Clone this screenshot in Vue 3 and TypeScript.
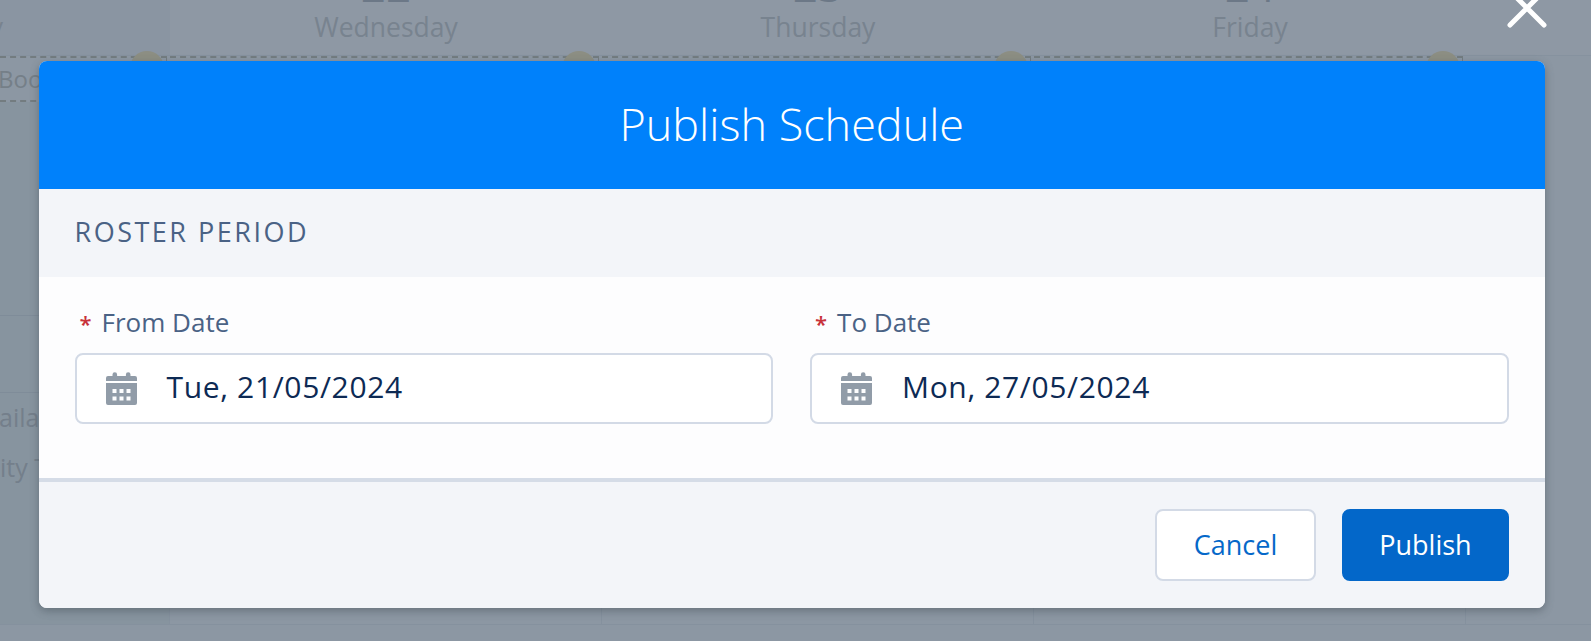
<script setup lang="ts">
interface DateField { label: string; value: string }
interface Day { num: string; name: string }
const days: Day[] = [
  { num: '22', name: 'Wednesday' },
  { num: '23', name: 'Thursday' },
  { num: '24', name: 'Friday' },
]
const fields: DateField[] = [
  { label: 'From Date', value: 'Tue, 21/05/2024' },
  { label: 'To Date', value: 'Mon, 27/05/2024' },
]
</script>

<template>
  <div class="page">
    <div class="calendar">
      <div class="head">
        <div class="head-cell first"><span class="day-cut">y</span></div>
        <div v-for="d in days" :key="d.name" class="head-cell">
          <span class="num">{{ d.num }}</span>
          <span class="day">{{ d.name }}</span>
        </div>
        <div class="head-cell last"></div>
      </div>
      <div class="band">
        <div class="band-cell first"><span class="boo">Boo</span><i class="dot"></i></div>
        <div v-for="d in days" :key="d.name" class="band-cell"><i class="dot"></i></div>
        <div class="band-cell last"></div>
      </div>
      <div class="rest">
        <div class="rest-cell first">
          <span class="side one">ailabl</span>
          <span class="side two">ity T</span>
        </div>
        <div v-for="d in days" :key="d.name" class="rest-cell"></div>
        <div class="rest-cell last"></div>
      </div>
    </div>

    <div class="overlay">
      <svg class="close" viewBox="0 0 40 40" width="40" height="40" aria-label="Close">
        <path d="M3 3 L37 37 M37 3 L3 37" stroke="#fff" stroke-width="5" stroke-linecap="round" fill="none" />
      </svg>
      <section class="modal">
        <header class="modal-head"><h1>Publish Schedule</h1></header>
        <div class="section-title">ROSTER PERIOD</div>
        <div class="modal-body">
          <div v-for="f in fields" :key="f.label" class="field">
            <label class="label"><abbr>*</abbr>{{ f.label }}</label>
            <div class="input">
              <svg class="cal-icon" viewBox="0 0 31 33" width="31" height="33">
                <path fill="#919ca8" d="M0 11h31v20a2 2 0 0 1-2 2H2a2 2 0 0 1-2-2z M2 4h4.500V2.500a2.300 2.300 0 0 1 4.600 0V4h8.800V2.500a2.300 2.300 0 0 1 4.600 0V4H29a2 2 0 0 1 2 2v3H0V6a2 2 0 0 1 2-2z"/>
                <g fill="#fdfdfe">
                  <rect x="6.500" y="17" width="4" height="4"/><rect x="13.500" y="17" width="4" height="4"/><rect x="20.500" y="17" width="4" height="4"/>
                  <rect x="6.500" y="24.500" width="4" height="4"/><rect x="13.500" y="24.500" width="4" height="4"/><rect x="20.500" y="24.500" width="4" height="4"/>
                </g>
              </svg>
              <span class="value">{{ f.value }}</span>
            </div>
          </div>
        </div>
        <footer class="modal-foot">
          <button class="btn neutral" type="button">Cancel</button>
          <button class="btn brand" type="button">Publish</button>
        </footer>
      </section>
    </div>
  </div>
</template>

<style>
html, body { margin: 0; padding: 0; background: #8b96a2; }
</style>

<style scoped>
.page {
  position: relative;
  width: 1591px;
  height: 641px;
  overflow: hidden;
  background: #8c97a3;
  font-family: "Open Sans", "Noto Sans", sans-serif;
}
.calendar { display: flex; flex-direction: column; height: 100%; }
.head, .band, .rest {
  display: grid;
  grid-template-columns: 170px 432px 432px 432px 1fr;
}
.head { height: 56px; box-sizing: border-box; border-bottom: 1px solid #86929f; background: #8e98a4; }
.head-cell {
  display: flex;
  flex-direction: column;
  align-items: center;
  box-sizing: border-box;
  overflow: hidden;
}
.head-cell.first { background: #8a95a2; align-items: flex-start; padding-top: 9px; }
.num {
  flex: none;
  margin-top: -33px;
  font-size: 44px;
  line-height: 36px;
  color: #6c7887;
}
.day { margin-top: 7px; font-size: 26.500px; line-height: 34px; color: #78838f; }
.day-cut { font-size: 26px; line-height: 34px; color: #78838f; margin-left: -10px; }
.band { height: 46px; }
.band-cell {
  position: relative;
  box-sizing: border-box;
  border-top: 2px dashed #737c80;
  border-bottom: 2px dashed #737c80;
  border-right: 1px solid #737c80;
  margin-right: 3px;
}
.band-cell.last { border: 0; margin: 0; }
.boo { display: block; margin-left: -2px; font-size: 24px; line-height: 42px; color: #757f88; }
.dot {
  position: absolute;
  right: 2px;
  top: -7px;
  width: 34px;
  height: 34px;
  border-radius: 50%;
  background: #8c8e83;
}
.rest { flex: 1; margin-bottom: 16px; border-bottom: 1px solid #85919e; }
.rest-cell { border-right: 1px solid #85919e; position: relative; overflow: hidden; }
.rest-cell.first {
  background:
    linear-gradient(#7f8c99, #7f8c99) 0 213px / 100% 1px no-repeat,
    linear-gradient(#7f8c99, #7f8c99) 0 290px / 100% 1px no-repeat,
    #87949f;
}
.rest-cell.last { border-right: 0; }
.side { position: absolute; font-size: 25px; color: #747f8b; line-height: 30px; }
.side.one { left: -1px; top: 300px; }
.side.two { left: 0; top: 350px; }

.overlay { position: absolute; inset: 0; }
.close { position: absolute; left: 1507px; top: -12px; }
.modal {
  position: absolute;
  left: 38.500px;
  top: 61px;
  width: 1506.500px;
  height: 547px;
  display: flex;
  flex-direction: column;
  border-radius: 8px;
  overflow: hidden;
  background: #f3f5f9;
  box-shadow: 0 3px 8px rgba(60, 70, 80, 0.45);
}
.modal-head {
  height: 128px;
  flex: none;
  display: flex;
  align-items: center;
  justify-content: center;
  box-sizing: border-box;
  padding-bottom: 4px;
  background: #0081fb;
}
.modal-head h1 {
  margin: 0;
  font-size: 45px;
  font-weight: 300;
  color: #fff;
}
.section-title {
  height: 88px;
  flex: none;
  display: flex;
  align-items: center;
  box-sizing: border-box;
  padding: 0 0 4px 36px;
  background: #f3f5f9;
  color: #4a6285;
  font-size: 27px;
  letter-spacing: 2.500px;
}
.modal-body {
  flex: 1;
  display: grid;
  grid-template-columns: 698.500px 698.500px;
  column-gap: 37px;
  padding: 0 36px;
  background: #fdfdfe;
  border-bottom: 4px solid #d5dce7;
}
.field { display: flex; flex-direction: column; }
.label {
  margin-top: 27px;
  height: 49px;
  font-size: 26px;
  line-height: 36px;
  color: #4a6285;
}
abbr { color: #c8323a; margin: 0 10px 0 5px; font-size: 22px; font-weight: 600; }
.input {
  height: 71px;
  box-sizing: border-box;
  display: flex;
  align-items: center;
  border: 2px solid #d3dae6;
  border-radius: 8px;
  padding-left: 29px;
  background: #fff;
}
.cal-icon { flex: none; margin-right: 30px; }
.value { font-size: 30px; line-height: 36px; letter-spacing: 0.650px; padding-bottom: 4px; color: #0d2a54; }
.modal-foot {
  height: 126px;
  flex: none;
  display: flex;
  align-items: center;
  justify-content: flex-end;
  gap: 26px;
  padding: 0 36px 0 0;
  box-sizing: border-box;
  background: #f3f5f9;
}
.btn {
  height: 72px;
  box-sizing: border-box;
  border-radius: 8px;
  font-family: inherit;
  font-size: 27px;
  padding: 0 0 2px;
}
.neutral { width: 161px; background: #fff; border: 2px solid #d3dae6; color: #0568c9; }
.brand { width: 167px; background: #0367c9; border: 2px solid #0367c9; color: #fff; }
</style>
